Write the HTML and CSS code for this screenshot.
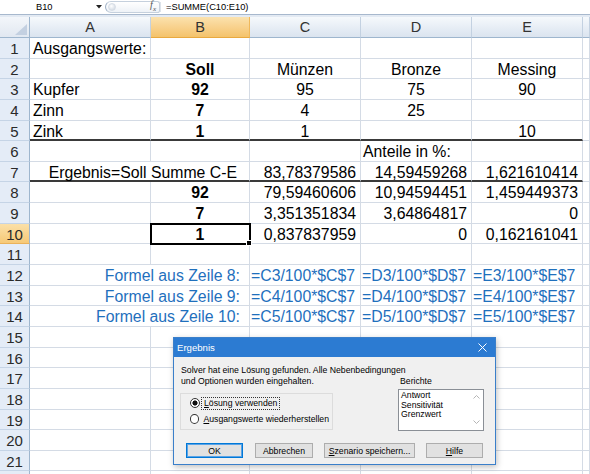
FILE: index.html
```html
<!DOCTYPE html>
<html lang="de">
<head>
    <meta charset="UTF-8">
    <title>Solver – Ergebnis</title>
    <link rel="stylesheet" href="styles.css">
</head>
<body>

<!-- Bearbeitungsleiste -->
<div class="fbar">
    <div class="namebox">B10</div>
    <div class="nb-drop"><svg width="6" height="4" viewBox="0 0 6 4"><path d="M0 0h6L3 3.5z" fill="#222"/></svg></div>
    <div class="pill"><span class="knob"></span><span class="fx"><i>f</i><sub>x</sub></span></div>
    <div class="formula">=SUMME(C10:E10)</div>
</div>
<div class="strip"></div>

<!-- Tabelle -->
<div class="sheet">
    <div class="r hdr">
        <div class="corner"><svg width="30" height="21" viewBox="0 0 30 21"><path d="M27 7v11H15z" fill="#c3d0e1"/></svg></div>
        <div class="ch">A</div><div class="ch on">B</div><div class="ch">C</div><div class="ch">D</div><div class="ch">E</div><div class="ch"></div>
    </div>
    <div class="r"><div class="rh">1</div><div class="c">Ausgangswerte:</div><div class="c"></div><div class="c"></div><div class="c"></div><div class="c"></div><div class="c"></div></div>
    <div class="r"><div class="rh">2</div><div class="c"></div><div class="c ctr b">Soll</div><div class="c ctr">Münzen</div><div class="c ctr">Bronze</div><div class="c ctr">Messing</div><div class="c"></div></div>
    <div class="r"><div class="rh">3</div><div class="c">Kupfer</div><div class="c ctr b">92</div><div class="c ctr">95</div><div class="c ctr">75</div><div class="c ctr">90</div><div class="c"></div></div>
    <div class="r"><div class="rh">4</div><div class="c">Zinn</div><div class="c ctr b">7</div><div class="c ctr">4</div><div class="c ctr">25</div><div class="c"></div><div class="c"></div></div>
    <div class="r"><div class="rh">5</div><div class="c tb">Zink</div><div class="c ctr b tb">1</div><div class="c ctr tb">1</div><div class="c tb"></div><div class="c ctr tb">10</div><div class="c"></div></div>
    <div class="r"><div class="rh">6</div><div class="c"></div><div class="c"></div><div class="c"></div><div class="c pl">Anteile in %:</div><div class="c"></div><div class="c"></div></div>
    <div class="r"><div class="rh">7</div><div class="c span2 tb lbl7">Ergebnis=Soll Summe C-E</div><div class="c rt tb">83,78379586</div><div class="c rt tb">14,59459268</div><div class="c rt tb">1,621610414</div><div class="c"></div></div>
    <div class="r"><div class="rh">8</div><div class="c"></div><div class="c ctr b">92</div><div class="c rt">79,59460606</div><div class="c rt">10,94594451</div><div class="c rt">1,459449373</div><div class="c"></div></div>
    <div class="r"><div class="rh">9</div><div class="c"></div><div class="c ctr b">7</div><div class="c rt">3,351351834</div><div class="c rt">3,64864817</div><div class="c rt">0</div><div class="c"></div></div>
    <div class="r"><div class="rh on">10</div><div class="c"></div><div class="c ctr b sel">1</div><div class="c rt">0,837837959</div><div class="c rt">0</div><div class="c rt">0,162161041</div><div class="c"></div></div>
    <div class="r"><div class="rh">11</div><div class="c"></div><div class="c"></div><div class="c"></div><div class="c"></div><div class="c"></div><div class="c"></div></div>
    <div class="r"><div class="rh">12</div><div class="c span2 blue lbl">Formel aus Zeile 8:</div><div class="c blue fm">=C3/100*$C$7</div><div class="c blue fm">=D3/100*$D$7</div><div class="c blue fm">=E3/100*$E$7</div><div class="c"></div></div>
    <div class="r"><div class="rh">13</div><div class="c span2 blue lbl">Formel aus Zeile 9:</div><div class="c blue fm">=C4/100*$C$7</div><div class="c blue fm">=D4/100*$D$7</div><div class="c blue fm">=E4/100*$E$7</div><div class="c"></div></div>
    <div class="r"><div class="rh">14</div><div class="c span2 blue lbl">Formel aus Zeile 10:</div><div class="c blue fm">=C5/100*$C$7</div><div class="c blue fm">=D5/100*$D$7</div><div class="c blue fm">=E5/100*$E$7</div><div class="c"></div></div>
    <div class="r"><div class="rh">15</div><div class="c"></div><div class="c"></div><div class="c"></div><div class="c"></div><div class="c"></div><div class="c"></div></div>
    <div class="r"><div class="rh">16</div><div class="c"></div><div class="c"></div><div class="c"></div><div class="c"></div><div class="c"></div><div class="c"></div></div>
    <div class="r"><div class="rh">17</div><div class="c"></div><div class="c"></div><div class="c"></div><div class="c"></div><div class="c"></div><div class="c"></div></div>
    <div class="r"><div class="rh">18</div><div class="c"></div><div class="c"></div><div class="c"></div><div class="c"></div><div class="c"></div><div class="c"></div></div>
    <div class="r"><div class="rh">19</div><div class="c"></div><div class="c"></div><div class="c"></div><div class="c"></div><div class="c"></div><div class="c"></div></div>
    <div class="r"><div class="rh">20</div><div class="c"></div><div class="c"></div><div class="c"></div><div class="c"></div><div class="c"></div><div class="c"></div></div>
    <div class="r"><div class="rh">21</div><div class="c"></div><div class="c"></div><div class="c"></div><div class="c"></div><div class="c"></div><div class="c"></div></div>
    <div class="r"><div class="rh"></div><div class="c"></div><div class="c"></div><div class="c"></div><div class="c"></div><div class="c"></div><div class="c"></div></div>
</div>

<!-- Solver-Dialog -->
<div class="dialog">
    <div class="dlg-title">
        <span>Ergebnis</span>
        <svg width="9" height="9" viewBox="0 0 9 9"><path d="M0.5 0.5l8 8M8.5 0.5l-8 8" stroke="#fff" stroke-width="1"/></svg>
    </div>
    <div class="dlg-body">
        <div class="dlg-main">
            <div class="dlg-left">
                <div class="msg">Solver hat eine Lösung gefunden. Alle Nebenbedingungen<br>und Optionen wurden eingehalten.</div>
                <div class="group">
                    <div class="radio-row"><span class="radio checked"></span><span class="radio-label focus"><u>L</u>ösung verwenden</span></div>
                    <div class="radio-row"><span class="radio"></span><span class="radio-label"><u>A</u>usgangswerte wiederherstellen</span></div>
                </div>
            </div>
            <div class="dlg-right">
                <div class="list-label">Berichte</div>
                <div class="listbox">
                    <div class="items">
                        <div>Antwort</div>
                        <div>Sensitivität</div>
                        <div>Grenzwert</div>
                    </div>
                    <div class="scroll">
                        <svg width="7" height="4" viewBox="0 0 7 4"><path d="M0.5 3.5l3-3 3 3" stroke="#b5b5b5" fill="none"/></svg>
                        <svg width="7" height="4" viewBox="0 0 7 4"><path d="M0.5 0.5l3 3 3-3" stroke="#b5b5b5" fill="none"/></svg>
                    </div>
                </div>
            </div>
        </div>
        <div class="dlg-buttons">
            <div class="btn def w-ok">OK</div>
            <div class="btn w-abb">Abbrechen</div>
            <div class="btn w-sz"><u>S</u>zenario speichern...</div>
            <div class="btn w-ok"><u>H</u>ilfe</div>
        </div>
    </div>
</div>

</body>
</html>
```

FILE: styles.css
```css
body {
    margin: 0;
    width: 590px;
    height: 474px;
    overflow: hidden;
    background: #fff;
    font-family: "Liberation Sans", Arial, sans-serif;
    position: relative;
}

/* Bearbeitungsleiste */
.fbar {
    display: flex;
    align-items: center;
    height: 14px;
    border-bottom: 1px solid #a7b8cd;
    font-size: 9.3px;
    color: #000;
}
.namebox {
    width: 95px;
    padding-left: 36px;
    box-sizing: border-box;
}
.nb-drop {
    width: 10px;
    display: flex;
    align-items: center;
    padding-left: 1px;
    box-sizing: border-box;
}
.pill {
    width: 55px;
    height: 12px;
    box-sizing: border-box;
    border: 1px solid #c5d0dd;
    border-left-color: #9fb0c5;
    border-radius: 7px 3px 3px 7px;
    background: linear-gradient(#ffffff, #eef2f7);
    display: flex;
    align-items: center;
    justify-content: space-between;
    padding: 0 3px 0 2px;
}
.knob {
    width: 8px;
    height: 8px;
    border-radius: 50%;
    background: radial-gradient(circle at 40% 35%, #ffffff, #c9d2dd);
    border: 1px solid #d6dde6;
    box-sizing: border-box;
}
.fx {
    font-family: "Liberation Serif", serif;
    color: #555;
    font-size: 10px;
    line-height: 10px;
}
.fx sub {
    font-size: 7px;
    font-style: italic;
}
.formula {
    padding-left: 5px;
    border-left: 1px solid #dde3ea;
}
.strip {
    height: 2px;
    background: #e3eaf3;
}

/* Tabelle */
.r {
    display: grid;
    grid-template-columns: 30px 121px 99px 111px 111px 111px 1fr;
    grid-template-rows: 20.65px;
}
.r.hdr {
    grid-template-rows: 21px;
}
.corner {
    background: linear-gradient(#f3f6fa, #e1e8f1);
    border-right: 1px solid #9eb6ce;
    border-bottom: 1px solid #9eb6ce;
    box-sizing: border-box;
}
.corner svg {
    display: block;
}
.ch {
    background: linear-gradient(#f6f9fc, #e6edf5 55%, #dbe4ef);
    border-right: 1px solid #c3d1e1;
    border-bottom: 1px solid #9eb6ce;
    box-sizing: border-box;
    text-align: center;
    font-size: 14.5px;
    line-height: 21px;
    color: #333;
}
.ch.on {
    background: linear-gradient(#fbe2ae, #f8d08a 55%, #f4c36b);
    border-right-color: #f0b85a;
    border-bottom-color: #e9a93f;
}
.rh {
    background: #e4ecf7;
    border-right: 1px solid #9eb6ce;
    border-bottom: 1px solid #c5d4e6;
    box-sizing: border-box;
    text-align: center;
    font-size: 15px;
    line-height: 22px;
    color: #2a2a2a;
}
.rh.on {
    background: linear-gradient(#fbe0a8, #f6c977);
    border-bottom-color: #eab25a;
}
.c {
    border-right: 1px solid #d4dbe5;
    border-bottom: 1px solid #d4dbe5;
    box-sizing: border-box;
    padding: 0 3px;
    font-size: 15.8px;
    line-height: 22.5px;
    white-space: nowrap;
    color: #000;
}
.ctr { text-align: center; }
.rt { text-align: right; padding-right: 4px; }
.b { font-weight: bold; }
.pl { padding-left: 2px; }
.fm { padding-left: 1px; }
.span2 { grid-column: span 2; }
.lbl7 { text-align: right; padding-right: 12px; }
.lbl { text-align: right; padding-right: 9px; }
.blue { color: #1f70bd; }
.tb { border-bottom: 2px solid #3a3a3a; }
.sel {
    position: relative;
    z-index: 1;
    outline: 2px solid #000;
    outline-offset: -1px;
}
.sel::after {
    content: "";
    position: absolute;
    right: -3px;
    bottom: -3px;
    width: 4px;
    height: 4px;
    background: #000;
    border: 1px solid #fff;
}

/* Dialog */
.dialog {
    position: absolute;
    left: 173px;
    top: 337px;
    width: 323px;
    height: 128px;
    box-sizing: border-box;
    border: 1px solid #3a7fca;
    background: #f0f0f0;
    box-shadow: 1px 2px 6px rgba(0, 0, 0, 0.25);
    font-family: "Liberation Sans", Arial, sans-serif;
    font-size: 8.7px;
    color: #000;
    z-index: 5;
}
.dlg-title {
    height: 19px;
    background: #2c7bd2;
    color: #fff;
    font-size: 9.6px;
    display: flex;
    align-items: center;
    justify-content: space-between;
    padding: 0 8px 0 3px;
}
.dlg-title svg {
    display: block;
}
.dlg-body {
    padding: 0 11px 0 6px;
}
.dlg-main {
    display: flex;
}
.dlg-left {
    width: 218px;
}
.msg {
    margin-top: 8px;
    padding-left: 1px;
    line-height: 11px;
    white-space: nowrap;
}
.group {
    margin-top: 6px;
    width: 153px;
    height: 37px;
    box-sizing: border-box;
    border: 1px solid #dcdcdc;
    padding: 1px 0 0 9px;
}
.radio-row {
    display: flex;
    align-items: center;
    height: 16px;
}
.radio {
    width: 10px;
    height: 10px;
    box-sizing: border-box;
    border: 1px solid #333;
    border-radius: 50%;
    background: #fff;
}
.radio.checked {
    background: radial-gradient(circle, #111 0 2.3px, #fff 2.8px);
}
.radio-label {
    margin-left: 1px;
    padding: 0 2px;
    line-height: 11px;
    border: 1px solid transparent;
    white-space: nowrap;
}
.radio-label.focus {
    border: 1px dotted #333;
}
.dlg-right {
    padding-top: 19px;
}
.list-label {
    line-height: 10px;
    padding-left: 2px;
}
.listbox {
    margin-top: 3px;
    width: 86px;
    height: 42px;
    box-sizing: border-box;
    border: 1px solid #8a8f96;
    background: #fff;
    display: flex;
}
.items {
    flex: 1;
    padding: 1px 2px;
    line-height: 9.7px;
}
.scroll {
    width: 13px;
    display: flex;
    flex-direction: column;
    align-items: center;
    justify-content: space-between;
    padding: 5px 0 6px;
    box-sizing: border-box;
}
.scroll svg {
    display: block;
}
.dlg-buttons {
    display: flex;
    gap: 11px;
    margin-top: 12px;
    padding-left: 6px;
}
.btn {
    height: 15px;
    box-sizing: border-box;
    border: 1px solid #adadad;
    background: #e1e1e1;
    display: flex;
    align-items: center;
    justify-content: center;
    white-space: nowrap;
}
.btn.def {
    border-color: #0078d7;
    box-shadow: inset 0 0 0 1px #5aa3e6;
    margin-right: 1px;
}
.w-ok { width: 57px; }
.w-abb { width: 58px; }
.w-sz { width: 91px; }
```
